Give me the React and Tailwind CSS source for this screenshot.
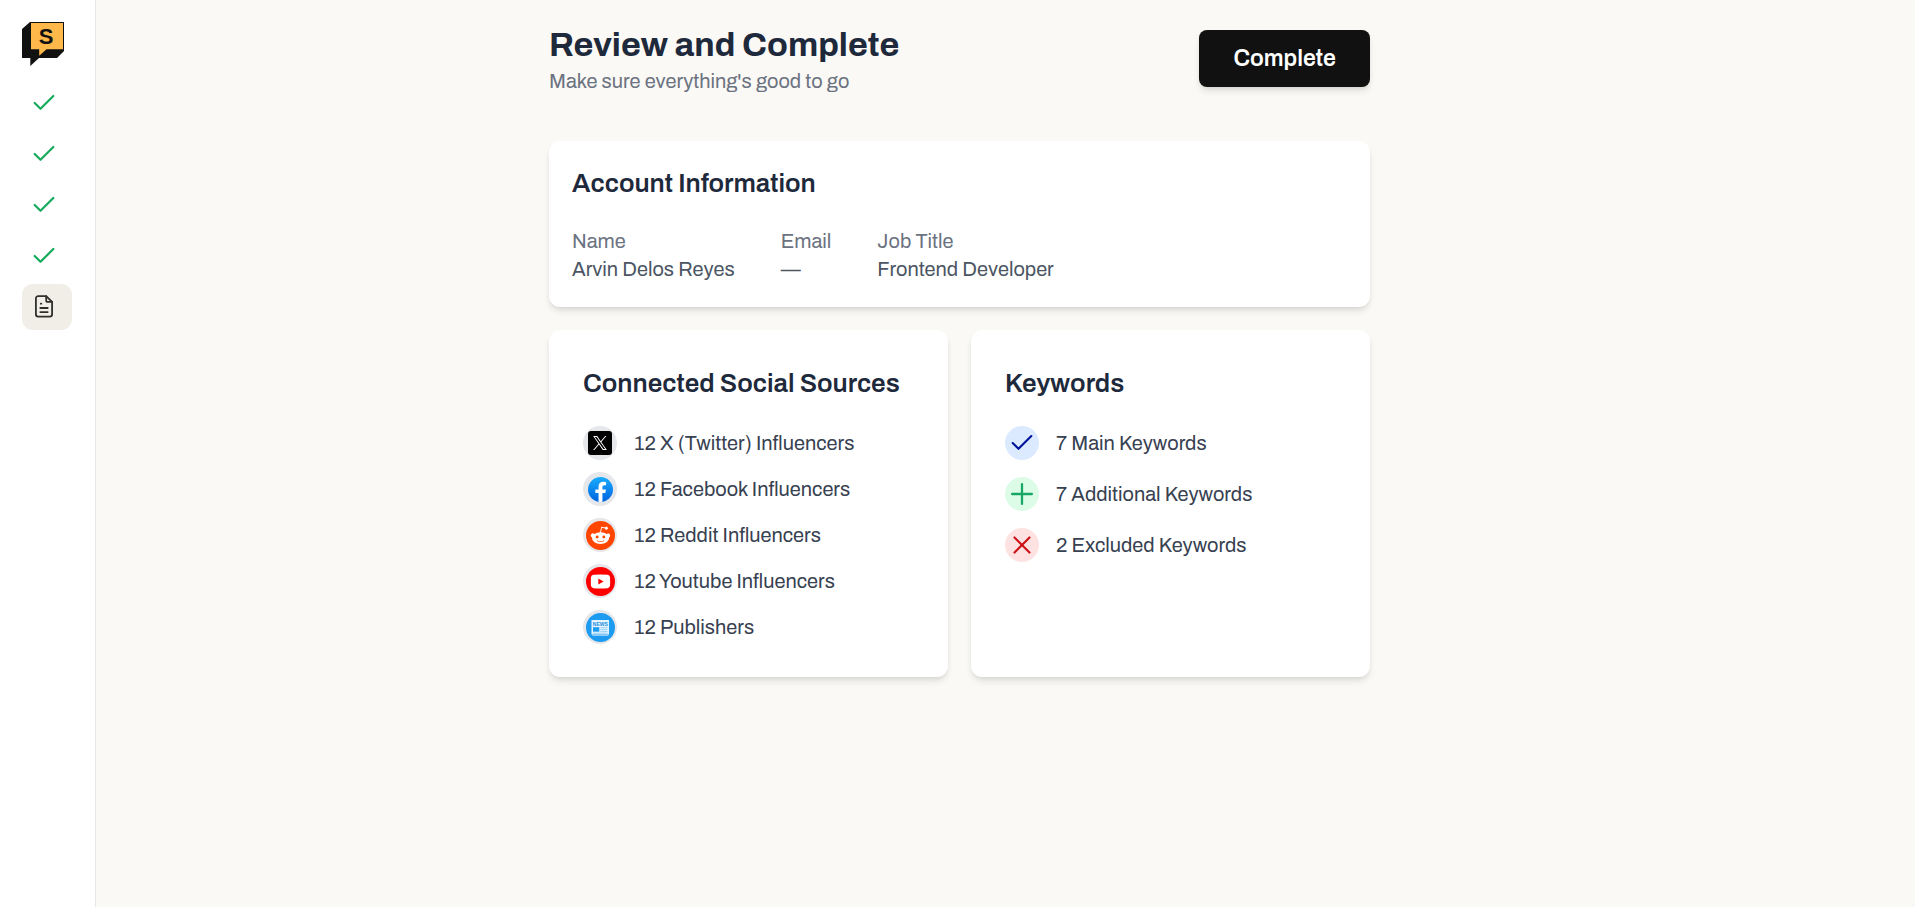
import { Check, Plus, X } from "lucide-react";

function Logo() {
  return (
    <svg viewBox="0 0 42 44" className="h-[44px] w-[42px]" role="img" aria-label="S">
      <path d="M0 7L8 0H42V29L35 36H17L8.300 44V36H0Z" fill="#111111" />
      <path d="M9 1H41V27.300H24.500L17.200 33.800V27.300H9Z" fill="#ffb84a" />
      <text x="24" y="22.300" textAnchor="middle" fontFamily="Liberation Sans, sans-serif" fontSize="22" fontWeight="700" fill="#111111">
        S
      </text>
    </svg>
  );
}

function DocIcon() {
  return (
    <svg viewBox="0 0 24 24" className="size-[24px]" fill="none" stroke="#2f2f2b" strokeWidth="1.800" strokeLinecap="round" strokeLinejoin="round" aria-hidden="true">
      <path d="M14.200 1.200H6.200A2.300 2.300 0 0 0 3.900 3.500V19.300A2.300 2.300 0 0 0 6.200 21.600H17.800A2.300 2.300 0 0 0 20.100 19.300V6.900Z" />
      <path d="M14.200 1.200V5.700A1.200 1.200 0 0 0 15.400 6.900H20.100" />
      <path d="M8.800 8.700H9.300M8.300 13H15.700M8.300 17.100H15.700" />
    </svg>
  );
}

function XLogo() {
  return (
    <span className="flex size-[24px] items-center justify-center rounded-[3px] bg-black text-white">
      <svg viewBox="0 0 1200 1227" className="size-[14px]" fill="currentColor" aria-hidden="true">
        <path d="M714.163 519.284L1160.89 0H1055.03L667.137 450.887L357.328 0H0L468.492 681.821L0 1226.37H105.866L515.491 750.218L842.672 1226.37H1200L714.137 519.284H714.163ZM569.165 687.828L521.697 619.934L144.011 79.6944H306.615L611.412 515.685L658.88 583.579L1055.08 1150.3H892.476L569.165 687.854V687.828Z" />
      </svg>
    </span>
  );
}

function FacebookLogo() {
  return (
    <svg viewBox="0 0 48 48" className="size-[25px]" aria-hidden="true">
      <defs>
        <linearGradient id="fb" x1="0" y1="0" x2="0" y2="1">
          <stop offset="0" stopColor="#18acfe" />
          <stop offset="1" stopColor="#0163e0" />
        </linearGradient>
      </defs>
      <circle cx="24" cy="24" r="24" fill="url(#fb)" />
      <path d="M33.300 30.800L34.400 23.900H27.700V19.400C27.700 17.500 28.600 15.700 31.600 15.700H34.700V9.800S31.900 9.300 29.300 9.300C23.800 9.300 20.200 12.600 20.200 18.600V23.900H14.100V30.800H20.200V47.700A24.500 24.500 0 0 0 27.700 47.700V30.800Z" fill="#fff" />
    </svg>
  );
}

function RedditLogo() {
  return (
    <svg viewBox="0 0 20 20" className="size-[29px]" aria-hidden="true">
      <circle cx="10" cy="10" r="10" fill="#ff4500" />
      <path
        d="M16.670 10A1.460 1.460 0 0 0 14.200 9a7.120 7.120 0 0 0-3.850-1.230l.650-3.120 2.140.450a1 1 0 1 0 .130-.610L10.820 4a.310.310 0 0 0-.370.240l-.740 3.470a7.140 7.140 0 0 0-3.900 1.230 1.460 1.460 0 1 0-1.610 2.390 2.870 2.870 0 0 0 0 .440c0 2.240 2.610 4.060 5.830 4.060s5.830-1.820 5.830-4.060a2.870 2.870 0 0 0 0-.440A1.460 1.460 0 0 0 16.670 10Zm-10 1a1 1 0 1 1 2 0 1 1 0 0 1-2 0Zm5.810 2.750a3.840 3.840 0 0 1-2.470.770 3.840 3.840 0 0 1-2.470-.770.270.270 0 0 1 .380-.380A3.270 3.270 0 0 0 10 14a3.280 3.280 0 0 0 2.090-.610.280.280 0 1 1 .390.400Zm-.180-1.710a1 1 0 1 1 0-2 1 1 0 0 1 0 2Z"
        fill="#fff"
      />
    </svg>
  );
}

function YoutubeLogo() {
  return (
    <svg viewBox="0 0 29 29" className="size-[29px]" aria-hidden="true">
      <circle cx="14.500" cy="14.500" r="14.500" fill="#f00" />
      <path d="M7.500 7.700Q14.500 7.200 21.500 7.700Q23.800 7.900 24 10.200Q24.300 14.500 24 18.600Q23.800 21 21.500 21.200Q14.500 21.600 7.500 21.200Q5.200 21 5 18.600Q4.700 14.500 5 10.200Q5.200 7.900 7.500 7.700Z" fill="#fff" />
      <path d="M12.300 11.400L17.600 14.400L12.300 17.400Z" fill="#f00" />
    </svg>
  );
}

function NewsLogo() {
  return (
    <svg viewBox="0 0 29 29" className="size-[29px]" aria-hidden="true">
      <circle cx="14.500" cy="14.500" r="14.500" fill="#1d9bf0" />
      <path d="M5.500 7H23V21.500H5.500Z" fill="#e6f4fe" />
      <path d="M6.200 21.500H22.400V23H6.200Z" fill="#8fcdf7" />
      <text x="14.300" y="12.700" textAnchor="middle" fontFamily="Liberation Sans, sans-serif" fontSize="5" fontWeight="700" fill="#1d8fe0">
        NEWS
      </text>
      <path d="M7 14.200H13.300V18.700H7Z" fill="#1d9bf0" />
      <path d="M14.300 14.700H21.500M14.300 16.600H21.500M14.300 18.500H21.500M7 20.200H21.500" stroke="#8fcdf7" strokeWidth=".9" />
    </svg>
  );
}

const sources = [
  { icon: <XLogo />, label: "12 X (Twitter) Influencers" },
  { icon: <FacebookLogo />, label: "12 Facebook Influencers" },
  { icon: <RedditLogo />, label: "12 Reddit Influencers" },
  { icon: <YoutubeLogo />, label: "12 Youtube Influencers" },
  { icon: <NewsLogo />, label: "12 Publishers" },
];

const keywords = [
  { icon: <Check size={28} strokeWidth={1.8} />, tone: "bg-[#dbeafe] text-[#00139a]", label: "7 Main Keywords" },
  { icon: <Plus size={34} strokeWidth={1.6} />, tone: "bg-[#dcfce7] text-[#16a765]", label: "7 Additional Keywords" },
  { icon: <X size={30} strokeWidth={1.7} />, tone: "bg-[#fee2e2] text-[#cc1016]", label: "2 Excluded Keywords" },
];

const account = [
  { term: "Name", value: "Arvin Delos Reyes" },
  { term: "Email", value: "—" },
  { term: "Job Title", value: "Frontend Developer" },
];

function Card({ title, className, children }) {
  return (
    <section className={`rounded-[11px] bg-white shadow-[0_5px_7px_-1px_rgba(0,0,0,0.1),0_2px_5px_-2px_rgba(0,0,0,0.1)] ${className}`}>
      <h2 className="text-[26px] leading-[39px] font-semibold text-[#1e293b]">{title}</h2>
      {children}
    </section>
  );
}

function Row({ icon, tone, label }) {
  return (
    <li className="flex items-center gap-[17px]">
      <span className={`flex size-[34px] shrink-0 items-center justify-center rounded-full ${tone}`}>{icon}</span>
      <span>{label}</span>
    </li>
  );
}

export default function App() {
  return (
    <div className="flex min-h-screen bg-[#faf9f5] font-['Archivo','Liberation_Sans',sans-serif] text-[20px] leading-[28px]">
      <aside className="w-[96px] shrink-0 border-r border-[#e5e7eb] bg-white px-[22px] pt-[22px]">
        <Logo />
        <nav aria-label="Steps" className="mt-[14px]">
          <ol className="flex flex-col gap-[5px]">
            {[1, 2, 3, 4].map((step) => (
              <li key={step}>
                <a href={`#step-${step}`} aria-label={`Step ${step}, done`} className="flex h-[46px] w-[50px] items-center pl-[8px] text-[#16ab5c]">
                  <Check size={28} strokeWidth={1.9} />
                </a>
              </li>
            ))}
            <li>
              <a href="#review" aria-label="Review" aria-current="step" className="flex h-[46px] w-[50px] items-center rounded-[11px] bg-[#f0eee6] pl-[10px]">
                <DocIcon />
              </a>
            </li>
          </ol>
        </nav>
      </aside>
      <main className="min-w-0 flex-1 pt-[22px] pr-[92px]">
        <div className="mx-auto max-w-[821px]">
          <header className="mb-[46px] flex items-center justify-between">
            <div>
              <h1 className="text-[34px] leading-[45px] font-bold text-[#1e293b]">Review and Complete</h1>
              <p className="text-[#6b7280]">Make sure everything's good to go</p>
            </div>
            <button type="button" className="h-[57px] rounded-[8px] bg-[#111111] px-[34px] text-[23px] font-semibold text-white shadow-[0_5px_7px_-1px_rgba(0,0,0,0.1),0_2px_5px_-2px_rgba(0,0,0,0.1)]">
              Complete
            </button>
          </header>
          <Card title="Account Information" className="px-[23px] pt-[23px] pb-[24px]">
            <dl className="mt-[24px] flex gap-[46px]">
              {account.map(({ term, value }) => (
                <div key={term}>
                  <dt className="text-[#6b7280]">{term}</dt>
                  <dd className="text-[#4b5563]">{value}</dd>
                </div>
              ))}
            </dl>
          </Card>
          <div className="mt-[23px] grid grid-cols-2 gap-[23px]">
            <Card title="Connected Social Sources" className="px-[34px] pt-[34px] pb-[33px]">
              <ul className="mt-[23px] flex flex-col gap-[12px] text-[#374151]">
                {sources.map((s) => (
                  <Row key={s.label} tone="bg-[#e5e7eb]" {...s} />
                ))}
              </ul>
            </Card>
            <Card title="Keywords" className="px-[34px] pt-[34px] pb-[33px]">
              <ul className="mt-[23px] flex flex-col gap-[17px] text-[#374151]">
                {keywords.map((k) => (
                  <Row key={k.label} {...k} />
                ))}
              </ul>
            </Card>
          </div>
        </div>
      </main>
    </div>
  );
}
